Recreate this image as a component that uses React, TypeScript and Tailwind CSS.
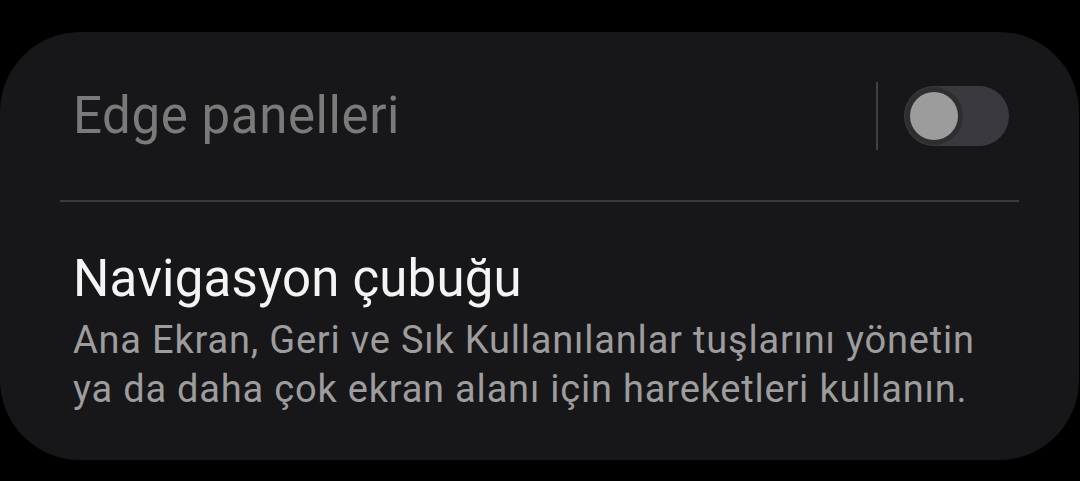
import React from "react";

export default function App() {
  return (
    <div
      className="w-[1080px] h-[481px] bg-black overflow-hidden pt-[32px]"
      style={{ fontFamily: "Roboto, 'Noto Sans', sans-serif" }}
    >
      <div className="w-[1079px] h-[428px] rounded-[80px] bg-[#171719] flex flex-col">
        <div className="h-[168px] flex items-center pl-[73px] pr-[70px]">
          <div className="flex-1 text-[51px] leading-[60px] tracking-[0.6px] text-[#7a7a7a]">Edge panelleri</div>
          <div className="w-[2px] h-[68px] bg-[#404043] mr-[26px]" />
          <div className="w-[105px] h-[60px] rounded-full bg-[#3a3a3e] flex items-center pl-[6px]">
            <div className="w-[48px] h-[48px] rounded-full bg-[#9c9c9c] ring-[5px] ring-[#2e2e31]" />
          </div>
        </div>
        <div className="h-[2px] mx-[60px] bg-[#3b3b3e]" />
        <div className="pl-[73px] pr-[40px] pt-[47px]">
          <div className="text-[51px] leading-[60px] tracking-[0.2px] text-[#f4f4f4]">Navigasyon çubuğu</div>
          <div className="mt-[7px] text-[38px] leading-[49px] tracking-[0.8px] text-[#9d9d9d] whitespace-nowrap">
            Ana Ekran, Geri ve Sık Kullanılanlar tuşlarını yönetin
            <br />
            ya da daha çok ekran alanı için hareketleri kullanın.
          </div>
        </div>
      </div>
    </div>
  );
}
